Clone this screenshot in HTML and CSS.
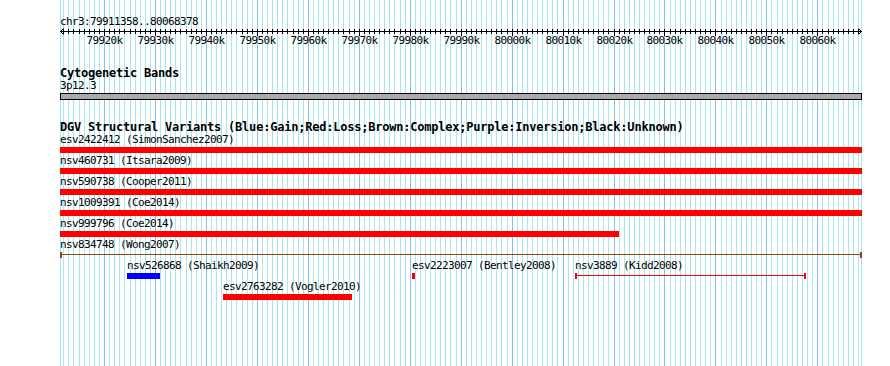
FILE: index.html
```html
<!DOCTYPE html>
<html>
<head>
  <meta charset="utf-8">
  <title>chr3:79911358..80068378</title>
  <link rel="stylesheet" href="styles.css">
</head>
<body>
<div class="panel">
  <svg class="grid" id="grid" width="890" height="366"></svg>
  <div class="content">
    <div class="seqname">chr3:79911358..80068378</div>
    <svg class="ruler" id="ruler" width="890" height="22"></svg>

    <div class="track cyto">
      <div class="track-title">Cytogenetic Bands</div>
      <div class="small">3p12.3</div>
      <div class="band"></div>
    </div>

    <div class="track dgv">
      <div class="track-title">DGV Structural Variants (Blue:Gain;Red:Loss;Brown:Complex;Purple:Inversion;Black:Unknown)</div>
      <div class="row">
        <div class="feat" style="left:0;width:802px"><span class="small">esv2422412 (SimonSanchez2007)</span><div class="bar loss"></div></div>
      </div>
      <div class="row">
        <div class="feat" style="left:0;width:802px"><span class="small">nsv460731 (Itsara2009)</span><div class="bar loss"></div></div>
      </div>
      <div class="row">
        <div class="feat" style="left:0;width:802px"><span class="small">nsv590738 (Cooper2011)</span><div class="bar loss"></div></div>
      </div>
      <div class="row">
        <div class="feat" style="left:0;width:802px"><span class="small">nsv1009391 (Coe2014)</span><div class="bar loss"></div></div>
      </div>
      <div class="row">
        <div class="feat" style="left:0;width:559px"><span class="small">nsv999796 (Coe2014)</span><div class="bar loss"></div></div>
      </div>
      <div class="row">
        <div class="feat" style="left:0;width:802px"><span class="small">nsv834748 (Wong2007)</span><div class="bar ends complex"></div></div>
      </div>
      <div class="row">
        <div class="feat" style="left:67px;width:33px"><span class="small">nsv526868 (Shaikh2009)</span><div class="bar gain"></div></div>
        <div class="feat" style="left:352px;width:3px"><span class="small">esv2223007 (Bentley2008)</span><div class="bar loss"></div></div>
        <div class="feat" style="left:515px;width:231px"><span class="small">nsv3889 (Kidd2008)</span><div class="bar ends loss-line"></div></div>
      </div>
      <div class="row">
        <div class="feat" style="left:163px;width:129px"><span class="small">esv2763282 (Vogler2010)</span><div class="bar loss"></div></div>
      </div>
    </div>
  </div>
</div>
<script src="script.js"></script>
</body>
</html>
```

FILE: styles.css
```css
body { margin: 0; background: #fff; }
.panel { position: relative; width: 890px; height: 366px; overflow: hidden; font-family: "DejaVu Sans Mono", monospace; color: #000; }
.grid { position: absolute; left: 0; top: 0; }
.content { position: relative; }

.small { display: block; font-size: 11px; line-height: 12px; height: 12px; letter-spacing: -0.62px; white-space: nowrap; }
.seqname { padding: 16px 0 0 60px; font-size: 11px; line-height: 12px; height: 12px; letter-spacing: -0.62px; }
.ruler { display: block; }
.tick-label { font-family: "DejaVu Sans Mono", monospace; font-size: 11px; letter-spacing: -0.62px; }

.track { margin-left: 60px; }
.track-title { font-size: 12px; font-weight: bold; line-height: 13px; height: 13px; letter-spacing: -0.22px; white-space: nowrap; }
.cyto { margin-top: 17px; }
.band { margin-top: 1px; width: 802px; height: 7px; box-sizing: border-box; border: 1px solid #000; background: #aaaaaa; }
.dgv { margin-top: 21px; }

.row { position: relative; height: 21px; }
.feat { position: absolute; top: 0; }
.bar { margin-top: 1px; height: 6px; box-sizing: border-box; }
.loss { background: #ff0000; }
.gain { background: #0000ff; }
.ends { border-left: 2px solid; border-right: 2px solid; background: linear-gradient(to bottom, transparent 2px, currentColor 2px, currentColor 3px, transparent 3px); }
.complex { color: #8b4513; }
.loss-line { color: #ff0000; }
```

FILE: script.js
```js
var NS = 'http://www.w3.org/2000/svg';
var start = 79911358, stop = 80068378;
var left = 60, scale = 800 / (stop - start);

function xOf(bp) { return left + (bp - start) * scale; }

function add(svg, tag, attrs, text) {
  var el = document.createElementNS(NS, tag);
  for (var k in attrs) el.setAttribute(k, attrs[k]);
  if (text) el.textContent = text;
  svg.appendChild(el);
  return el;
}

// grid behind the tracks
var grid = document.getElementById('grid');
add(grid, 'line', { x1: 60.5, x2: 60.5, y1: 0, y2: 366, stroke: '#aae8ee' });
add(grid, 'line', { x1: 861.5, x2: 861.5, y1: 0, y2: 366, stroke: '#aae8ee' });
for (var k = 79912; k <= 80068; k++) {
  var x = Math.round(xOf(k * 1000)) + 0.5;
  add(grid, 'line', { x1: x, x2: x, y1: 0, y2: 366, stroke: k % 10 ? '#aae8ee' : '#88c0ea' });
}

// ruler with ticks and labels
var ruler = document.getElementById('ruler');
add(ruler, 'line', { x1: 60, x2: 862, y1: 3.5, y2: 3.5, stroke: '#000' });
add(ruler, 'polyline', { points: '63.5,0.5 60.5,3.5 63.5,6.5', fill: 'none', stroke: '#000' });
add(ruler, 'polyline', { points: '858.5,0.5 861.5,3.5 858.5,6.5', fill: 'none', stroke: '#000' });
for (var k = 79912; k <= 80068; k++) {
  var x = Math.round(xOf(k * 1000)) + 0.5;
  var major = k % 10 == 0;
  add(ruler, 'line', { x1: x, x2: x, y1: 1, y2: major ? 8 : 6, stroke: '#000' });
  if (major) add(ruler, 'text', { x: x, y: 16, 'text-anchor': 'middle', 'class': 'tick-label' }, k + 'k');
}
```
